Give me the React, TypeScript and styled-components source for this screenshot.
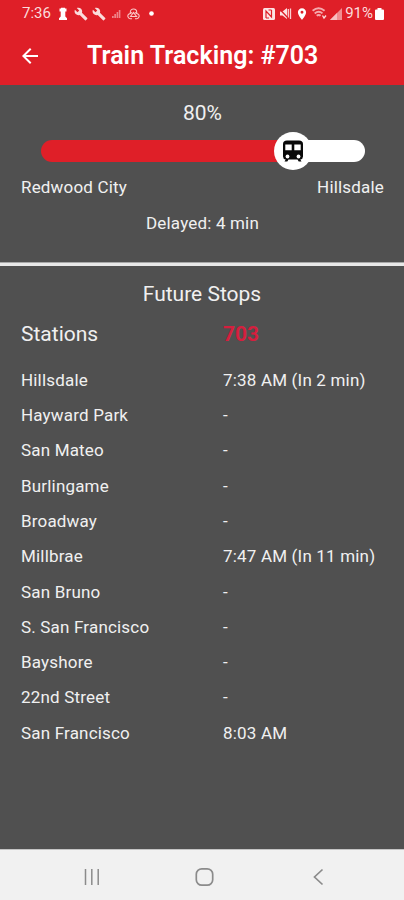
import React from "react";
import styled, { createGlobalStyle } from "styled-components";
import { MdArrowBack, MdBuild, MdLocationOn } from "react-icons/md";

const GlobalStyle = createGlobalStyle`
  * { box-sizing: border-box; }
  body { margin: 0; background: #505050; font-family: Roboto, "Liberation Sans", sans-serif; }
`;

const Screen = styled.div`
  width: 404px;
  height: 900px;
  display: flex;
  flex-direction: column;
  background: #505050;
  color: #f0f0f0;
  overflow: hidden;
`;

const Header = styled.header`
  height: 85px;
  background: #df1f28;
  color: #fff;
`;

const StatusBar = styled.div`
  height: 27px;
  padding: 0 20px 0 22px;
  display: flex;
  align-items: center;
  justify-content: space-between;
  color: #fbdcdc;
`;

const StatusGroup = styled.div`
  display: flex;
  align-items: center;
  height: 27px;
  svg { display: block; flex: none; }
`;

const StatusText = styled.span<{ $spacing: number }>`
  font-size: 15px;
  line-height: 27px;
  letter-spacing: ${(p) => p.$spacing}px;
`;

const Gap = styled.span<{ $w: number }>`
  width: ${(p) => p.$w}px;
  flex: none;
`;

const TitleBar = styled.div`
  height: 58px;
  display: grid;
  grid-template-columns: 87px 1fr;
  align-items: center;
`;

const BackButton = styled.button`
  border: 0;
  padding: 0;
  margin: 0 0 1px 18px;
  width: 24px;
  height: 24px;
  background: none;
  color: #fff;
  svg { display: block; }
`;

const Title = styled.h1`
  margin: 0;
  font-size: 25px;
  line-height: 28px;
  font-weight: 600;
  letter-spacing: 0.03px;
  white-space: nowrap;
`;

const Progress = styled.section`
  height: 177px;
  padding: 16px 20px 0 21px;
  display: flex;
  flex-direction: column;
`;

const Percent = styled.div`
  text-align: center;
  font-size: 21px;
  line-height: 24px;
`;

const Track = styled.div`
  position: relative;
  display: flex;
  height: 22px;
  margin: 15px 19px 0 20px;
`;

const Fill = styled.div`
  width: 253px;
  border-radius: 11px 0 0 11px;
  background: #df1f28;
`;

const Remaining = styled.div`
  flex: 1;
  border-radius: 0 11px 11px 0;
  background: #fff;
`;

const Thumb = styled.div`
  position: absolute;
  left: 233px;
  top: -8px;
  width: 38px;
  height: 38px;
  border-radius: 50%;
  background: #fff;
  display: grid;
  place-items: center;
`;

const Ends = styled.div`
  display: flex;
  justify-content: space-between;
  margin-top: 14px;
`;

const Label = styled.span`
  font-size: 17px;
  line-height: 22px;
  font-weight: 450;
  letter-spacing: 0.18px;
  white-space: nowrap;
`;

const Delay = styled.div`
  display: flex;
  justify-content: center;
  margin-top: 14px;
`;

const Divider = styled.div`
  height: 4px;
  background: #e8e8e8;
  border-top: 1px solid #a8a8a8;
`;

const Stops = styled.section`
  flex: 1;
  padding: 15px 0 0 21px;
`;

const Heading = styled.h2`
  margin: 0 21px 0 0;
  text-align: center;
  font-size: 21px;
  line-height: 26px;
  font-weight: 420;
`;

const Row = styled.div`
  display: grid;
  grid-template-columns: 202px 1fr;
  height: 35.32px;
  align-items: center;
`;

const HeadRow = styled(Row)`
  height: 27px;
  margin: 13px 0 15px;
  font-size: 21px;
  font-weight: 420;
`;

const TrainNumber = styled.span`
  color: #d51f3e;
  font-weight: 700;
`;

const NavBar = styled.nav`
  height: 51px;
  background: #f1f1f1;
  border-top: 1px solid #c4c4c4;
  display: flex;
  align-items: center;
  justify-content: space-between;
  padding: 3px 79px 0 82px;
  svg { display: block; }
`;

const stops: [string, string][] = [
  ["Hillsdale", "7:38 AM (In 2 min)"],
  ["Hayward Park", "-"],
  ["San Mateo", "-"],
  ["Burlingame", "-"],
  ["Broadway", "-"],
  ["Millbrae", "7:47 AM (In 11 min)"],
  ["San Bruno", "-"],
  ["S. San Francisco", "-"],
  ["Bayshore", "-"],
  ["22nd Street", "-"],
  ["San Francisco", "8:03 AM"],
];

const RookIcon = () => (
  <svg width="10" height="14" viewBox="0 0 10 14" fill="#fff">
    <path d="M1.500 1.500H3V.8h4v.7h1.500v3H7.300v5L9 11.300V13H1v-1.700l1.700-1.800v-5H1.500z" />
  </svg>
);

const FaintSignal = () => (
  <svg width="10" height="10" viewBox="0 0 10 10" fill="#ee8589">
    <path d="M1 7h1.700v2H1zM3.300 5H5v4H3.300zM5.600 3h1.600v6H5.600zM7.800 1h1.600v8H7.800z" />
  </svg>
);

const TriangleKnot = () => (
  <svg width="13" height="12" viewBox="0 0 13 12" fill="none" stroke="#fac7c8" strokeWidth="1.100">
    <path d="M3.300 6V4.200a3.200 3.200 0 0 1 6.400 0V6M5 10.700H3.200a2.600 2.600 0 0 1-1.500-4.500L5 4.500M8 10.700h1.800a2.600 2.600 0 0 0 1.500-4.500L8 4.500M3.500 8.500l3-4 3 4z" />
  </svg>
);

const NfcIcon = () => (
  <svg width="12" height="12" viewBox="0 0 12 12">
    <rect width="12" height="12" rx="1.500" fill="#fce3e3" />
    <path d="M3 10V3l5.500 6V2M5.500 2h3M3 10h3" fill="none" stroke="#df1f28" strokeWidth="1.200" />
  </svg>
);

const MuteIcon = () => (
  <svg width="13" height="13" viewBox="0 0 13 13">
    <path d="M1 4.500h2.500L8 1v11L3.500 8.500H1z" fill="#fce3e3" />
    <path d="M9.300 2v9M11.500 1.500v10.500" stroke="#fbd0d1" strokeWidth="1.300" />
    <path d="M.5 2l9 9.500" stroke="#df1f28" strokeWidth="1.300" />
  </svg>
);

const WifiIcon = () => (
  <svg width="15" height="13" viewBox="0 0 15 13" fill="none" stroke="#f5aaad" strokeWidth="1.900">
    <path d="M.6 3.800q6-5 12 0M2.700 6.400q4-3.300 7.800 0M4.700 8.800q2-1.600 3.900 0" />
    <path d="M10.500 8.500l1.500 2.500 2-2.500" stroke="#fbdcdc" strokeWidth="1.300" />
  </svg>
);

const SignalIcon = () => (
  <svg width="12" height="12" viewBox="0 0 12 12">
    <path d="M0 12L12 0v12z" fill="#f08d91" />
    <path d="M0 12l7-7v7z" fill="#f8bfc1" />
  </svg>
);

const BatteryIcon = () => (
  <svg width="9" height="12" viewBox="0 0 9 12" fill="#fff">
    <path d="M2.500 0h4v1.500H8q1 0 1 1V11q0 1-1 1H1q-1 0-1-1V2.500q0-1 1-1h1.500z" />
  </svg>
);

const TrainIcon = () => (
  <svg width="20" height="22" viewBox="0 0 20 22">
    <path d="M4 .5h12q4 0 4 3.500v12.500q0 2.500-2.700 3l1.200 2h-2.800l-1.200-2h-9l-1.200 2H1.500l1.200-2Q0 19 0 16.500V4Q0 .5 4 .5z" fill="#090909" />
    <path d="M2.300 4.600h6.400v5.600H2.300zM11.300 4.600h6.400v5.600h-6.400z" fill="#fff" />
    <circle cx="4.500" cy="16.500" r="1.900" fill="#fff" />
    <circle cx="15.500" cy="16.500" r="1.900" fill="#fff" />
  </svg>
);

export default function App() {
  return (
    <Screen>
      <GlobalStyle />
      <Header>
        <StatusBar>
          <StatusGroup>
            <StatusText $spacing={0}>7:36</StatusText>
            <Gap $w={7} />
            <RookIcon />
            <Gap $w={6} />
            <MdBuild size={14} />
            <Gap $w={4} />
            <MdBuild size={14} />
            <Gap $w={5} />
            <FaintSignal />
            <Gap $w={6} />
            <TriangleKnot />
            <Gap $w={9} />
            <svg width="5" height="5" viewBox="0 0 5 5"><circle cx="2.500" cy="2.500" r="2.300" fill="#fff" /></svg>
          </StatusGroup>
          <StatusGroup>
            <NfcIcon />
            <Gap $w={4} />
            <MuteIcon />
            <Gap $w={3} />
            <MdLocationOn size={14} color="#fff" />
            <Gap $w={3} />
            <WifiIcon />
            <Gap $w={3} />
            <SignalIcon />
            <Gap $w={3} />
            <StatusText $spacing={0}>91%</StatusText>
            <Gap $w={2} />
            <BatteryIcon />
          </StatusGroup>
        </StatusBar>
        <TitleBar>
          <BackButton aria-label="Back"><MdArrowBack size={24} /></BackButton>
          <Title>Train Tracking: #703</Title>
        </TitleBar>
      </Header>
      <Progress>
        <Percent>80%</Percent>
        <Track>
          <Fill />
          <Remaining />
          <Thumb><TrainIcon /></Thumb>
        </Track>
        <Ends>
          <Label>Redwood City</Label>
          <Label>Hillsdale</Label>
        </Ends>
        <Delay><Label>Delayed: 4 min</Label></Delay>
      </Progress>
      <Divider />
      <Stops>
        <Heading>Future Stops</Heading>
        <HeadRow>
          <span>Stations</span>
          <TrainNumber>703</TrainNumber>
        </HeadRow>
        {stops.map(([name, time]) => (
          <Row key={name}>
            <Label>{name}</Label>
            <Label>{time}</Label>
          </Row>
        ))}
      </Stops>
      <NavBar>
        <svg width="20" height="18" viewBox="0 0 20 18" stroke="#8b8b8b" strokeWidth="1.500">
          <path d="M3.500 1v16M9.800 1v16M16.200 1v16" />
        </svg>
        <svg width="20" height="20" viewBox="2.500 0 20 20" overflow="visible" fill="none" stroke="#8b8b8b" strokeWidth="1.700">
          <rect x="1.800" y="1.800" width="16.400" height="16.400" rx="5.500" />
        </svg>
        <svg width="14" height="18" viewBox="0 0 14 18" fill="none" stroke="#8b8b8b" strokeWidth="1.700">
          <path d="M11.500 1.500L3.500 9l8 7.500" />
        </svg>
      </NavBar>
    </Screen>
  );
}
